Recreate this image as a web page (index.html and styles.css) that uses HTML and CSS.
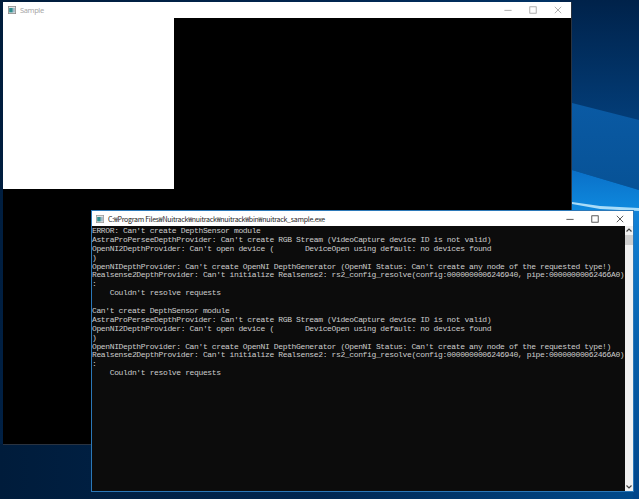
FILE: index.html
```html
<!DOCTYPE html>
<html lang="en">
<head>
<meta charset="utf-8">
<title>Nuitrack sample</title>
<link rel="stylesheet" href="styles.css">
</head>
<body>
<main class="desktop">
  <svg class="wallpaper" viewBox="0 0 639 499" aria-hidden="true">
    <defs>
      <linearGradient id="base" x1="0" y1="0" x2="1" y2="0.25">
        <stop offset="0" stop-color="#001c3b"/>
        <stop offset="0.5" stop-color="#002550"/>
        <stop offset="1" stop-color="#003a72"/>
      </linearGradient>
      <linearGradient id="topright" x1="0" y1="0" x2="0" y2="1">
        <stop offset="0" stop-color="#00224a"/>
        <stop offset="1" stop-color="#033d78"/>
      </linearGradient>
      <linearGradient id="band" x1="0" y1="0" x2="0" y2="1">
        <stop offset="0" stop-color="#0a5aa4"/>
        <stop offset="1" stop-color="#075296"/>
      </linearGradient>
      <linearGradient id="low" x1="0" y1="0" x2="0" y2="1">
        <stop offset="0" stop-color="#0a70c8"/>
        <stop offset="1" stop-color="#0f8ce0"/>
      </linearGradient>
      <linearGradient id="side" x1="0" y1="0" x2="0" y2="1">
        <stop offset="0" stop-color="#1283d8"/>
        <stop offset="0.45" stop-color="#0660ac"/>
        <stop offset="1" stop-color="#004488"/>
      </linearGradient>
      <linearGradient id="bottom" x1="0" y1="0" x2="1" y2="0">
        <stop offset="0" stop-color="#001c3b"/>
        <stop offset="0.5" stop-color="#002650"/>
        <stop offset="1" stop-color="#004a8c"/>
      </linearGradient>
    </defs>
    <rect class="wall-fill" width="639" height="499" fill="url(#base)"/>
    <rect y="444" width="639" height="55" fill="url(#bottom)"/>
    <rect x="560" y="0" width="79" height="120" fill="url(#topright)"/>
    <polygon points="572,103 639,120 639,190 572,170" fill="url(#band)"/>
    <polygon points="572,170 639,190 639,215 572,215" fill="url(#low)"/>
    <polygon points="572,202 600,206 639,208 639,211 600,209 572,204" fill="#a9dcf8"/>
    <rect x="633" y="211" width="6" height="288" fill="url(#side)"/>
  </svg>

  <section class="window sample-window">
    <header class="titlebar sample-title">
      <svg class="app-icon" viewBox="0 0 10 10" aria-hidden="true">
        <rect x="0.5" y="0.5" width="9" height="9" fill="#e4e4e4" stroke="#8a8a8a"/>
        <rect x="1.5" y="2.5" width="4.5" height="5.5" fill="#2f8f8f"/>
        <rect x="6" y="2.5" width="2.5" height="5.5" fill="#9fb8c8"/>
      </svg>
      <span class="title-text">Sample</span>
      <div class="controls controls-muted">
        <svg class="ctl" viewBox="0 0 10 10" aria-hidden="true"><path d="M0.5 5.5H9.5"/></svg>
        <svg class="ctl" viewBox="0 0 10 10" aria-hidden="true"><rect x="1" y="1" width="8" height="8"/></svg>
        <svg class="ctl" viewBox="0 0 10 10" aria-hidden="true"><path d="M1 1L9 9M9 1L1 9"/></svg>
      </div>
    </header>
    <div class="sample-canvas"><div class="sample-white"></div></div>
  </section>

  <section class="window console-window">
    <header class="titlebar console-title">
      <svg class="app-icon" viewBox="0 0 10 10" aria-hidden="true">
        <rect x="0.5" y="0.5" width="9" height="9" fill="#e4e4e4" stroke="#9a9a9a"/>
        <rect x="1.5" y="2.5" width="4.5" height="5.5" fill="#2f8f8f"/>
        <rect x="6" y="2.5" width="2.5" height="5.5" fill="#9fb8c8"/>
      </svg>
      <span class="title-text console-name">C:₩Program Files₩Nuitrack₩nuitrack₩nuitrack₩bin₩nuitrack_sample.exe</span>
      <div class="controls">
        <svg class="ctl" viewBox="0 0 10 10" aria-hidden="true"><path d="M0.5 5.5H9.5"/></svg>
        <svg class="ctl" viewBox="0 0 10 10" aria-hidden="true"><rect x="1" y="1" width="8" height="8"/></svg>
        <svg class="ctl" viewBox="0 0 10 10" aria-hidden="true"><path d="M1 1L9 9M9 1L1 9"/></svg>
      </div>
    </header>
    <div class="console-body">
      <pre class="console-text">ERROR: Can't create DepthSensor module
AstraProPerseeDepthProvider: Can't create RGB Stream (VideoCapture device ID is not valid)
OpenNI2DepthProvider: Can't open device (       DeviceOpen using default: no devices found
)
OpenNIDepthProvider: Can't create OpenNI DepthGenerator (OpenNI Status: Can't create any node of the requested type!)
Realsense2DepthProvider: Can't initialize Realsense2: rs2_config_resolve(config:0000000006246940, pipe:00000000062466A0)
:
    Couldn't resolve requests

Can't create DepthSensor module
AstraProPerseeDepthProvider: Can't create RGB Stream (VideoCapture device ID is not valid)
OpenNI2DepthProvider: Can't open device (       DeviceOpen using default: no devices found
)
OpenNIDepthProvider: Can't create OpenNI DepthGenerator (OpenNI Status: Can't create any node of the requested type!)
Realsense2DepthProvider: Can't initialize Realsense2: rs2_config_resolve(config:0000000006246940, pipe:00000000062466A0)
:
    Couldn't resolve requests</pre>
      <div class="scrollbar">
        <svg class="arrow" viewBox="0 0 8 8" aria-hidden="true"><path d="M1.5 5L4 2.5L6.5 5"/></svg>
        <div class="thumb"></div>
        <div class="track"></div>
        <svg class="arrow" viewBox="0 0 8 8" aria-hidden="true"><path d="M1.5 3L4 5.5L6.5 3"/></svg>
      </div>
    </div>
  </section>
</main>
</body>
</html>
```
FILE: styles.css
```css
html, body {
  margin: 0;
  padding: 0;
  background: #001c3b;
}

.desktop {
  position: relative;
  width: 639px;
  height: 499px;
  overflow: hidden;
}

.wallpaper {
  position: absolute;
  left: 0;
  top: 0;
  width: 639px;
  height: 499px;
  display: block;
}

.window {
  position: absolute;
  display: flex;
  flex-direction: column;
  box-sizing: border-box;
}

.sample-window {
  left: 3px;
  top: 2px;
  width: 569px;
  height: 443px;
  border-right: 1px solid #2a3340;
  border-bottom: 1px solid #2a3340;
}

.console-window {
  left: 91px;
  top: 210px;
  width: 543px;
  height: 282px;
  border: 1px solid #2b78b8;
}

.titlebar {
  display: flex;
  align-items: center;
  background: #fff;
  flex: none;
}

.sample-title {
  height: 16px;
  padding-left: 5px;
  gap: 4px;
}

.console-title {
  height: 15px;
  padding-left: 4px;
  gap: 4px;
}

.app-icon {
  width: 8px;
  height: 8px;
  flex: none;
}

.title-text {
  font-family: "Noto Sans", "Noto Sans CJK KR", sans-serif;
  font-size: 7.5px;
  line-height: 12px;
  letter-spacing: -0.4px;
  color: #a8a8a8;
  white-space: nowrap;
}

.console-name {
  font-family: "Noto Sans CJK KR", "Noto Sans", sans-serif;
  font-size: 7px;
  color: #222;
  letter-spacing: -0.26px;
}

.controls {
  margin-left: auto;
  display: flex;
  align-items: center;
  gap: 17px;
  padding-right: 9px;
}

.ctl {
  width: 8px;
  height: 8px;
  fill: none;
  stroke: #333;
  stroke-width: 1;
}

.controls-muted .ctl {
  stroke: #9c9c9c;
}

.sample-canvas {
  flex: 1;
  background: #000;
}

.sample-white {
  width: 171px;
  height: 171px;
  background: #fff;
}

.console-body {
  flex: 1;
  min-height: 0;
  display: flex;
  background: #0c0c0c;
}

.console-text {
  flex: 1;
  min-width: 0;
  margin: 0;
  padding-top: 1px;
  overflow: hidden;
  font-family: "Liberation Mono", "DejaVu Sans Mono", monospace;
  font-size: 8px;
  letter-spacing: -0.365px;
  line-height: 8.89px;
  color: #cccccc;
  white-space: pre;
}

.scrollbar {
  width: 8px;
  flex: none;
  display: flex;
  flex-direction: column;
  background: #f0f0f0;
}

.arrow {
  width: 8px;
  height: 9px;
  flex: none;
  fill: none;
  stroke: #404040;
  stroke-width: 1.2;
}

.thumb {
  height: 10px;
  flex: none;
  background: #cdcdcd;
}

.track {
  flex: 1;
}
```
